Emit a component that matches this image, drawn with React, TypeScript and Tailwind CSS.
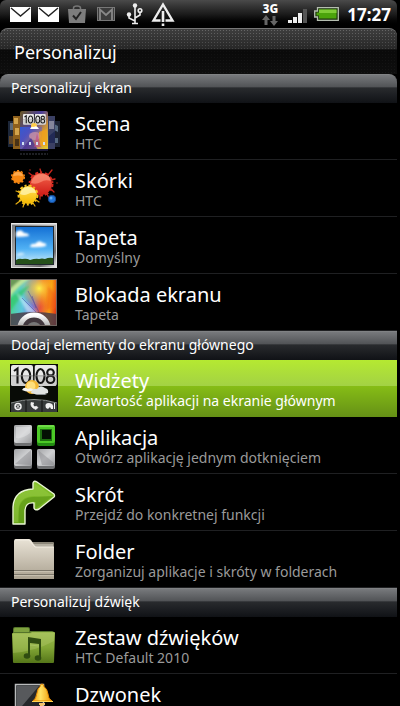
import type { ReactNode } from "react";

function Icon({ children }: { children: ReactNode }) {
  return (
    <svg viewBox="0 0 56 56" className="h-14 w-14 shrink-0" aria-hidden="true">
      {children}
    </svg>
  );
}

function FlipDigits({ x, y, s }: { x: number; y: number; s: number }) {
  return (
    <g transform={`translate(${x} ${y}) scale(${s})`}>
      <rect x="0" y="0" width="22" height="21" rx="2" fill="#e9e9e9" />
      <rect x="23.5" y="0" width="22" height="21" rx="2" fill="#e9e9e9" />
      <rect x="0" y="11" width="45.5" height="10" rx="2" fill="#cfcfcf" />
      <g fill="none" stroke="#151515" strokeWidth="2.1">
        <path d="M3 6L6.500 3.500V18.500" />
        <ellipse cx="15" cy="11" rx="4.200" ry="7" />
        <ellipse cx="29.500" cy="11" rx="4" ry="7" />
        <ellipse cx="39.500" cy="7.500" rx="3.300" ry="3.300" />
        <ellipse cx="39.500" cy="14.300" rx="3.800" ry="3.700" />
      </g>
      <path d="M0 10.800H46" stroke="#888" strokeWidth="0.8" />
      <path d="M22.800 0V21" stroke="#111" strokeWidth="1.4" />
    </g>
  );
}

function SceneIcon() {
  return (
    <Icon>
      <defs>
        <linearGradient id="sceneBg" x1="0" y1="0" x2="1" y2="1">
          <stop offset="0" stopColor="#6d5a22" />
          <stop offset="0.4" stopColor="#4b3f9c" />
          <stop offset="0.65" stopColor="#c9923c" />
          <stop offset="1" stopColor="#e8d030" />
        </linearGradient>
        <linearGradient id="sceneBlue" x1="0" y1="0" x2="1" y2="1">
          <stop offset="0" stopColor="#2f58d8" />
          <stop offset="1" stopColor="#8a5ac8" stopOpacity="0" />
        </linearGradient>
        <filter id="sceneSoft">
          <feGaussianBlur stdDeviation="0.7" />
        </filter>
      </defs>
      <g filter="url(#sceneSoft)">
        <rect x="2" y="18" width="7" height="26" fill="#1c2838" />
        <rect x="4" y="20" width="4" height="7" fill="#5b6b7a" />
        <rect x="3" y="33" width="5" height="8" fill="#5d452c" />
        <rect x="7" y="13" width="7" height="33" fill="#8d5e1a" />
        <path d="M8 15h4v6H8zM9 25h4v7H9z" fill="#d3a44c" />
        <rect x="9" y="36" width="4" height="7" fill="#493012" />
        <rect x="47" y="18" width="7" height="26" fill="#1a2232" />
        <path d="M48 21l4 2v6l-4-2zM49 35h3v5h-3z" fill="#556880" />
        <rect x="41" y="13" width="8" height="33" fill="#3a4164" />
        <path d="M43 18h5v8h-5z" fill="#85869c" />
        <path d="M43 33l6-5v12h-6z" fill="#232c55" />
      </g>
      <rect x="14" y="8" width="28" height="40" rx="2" fill="url(#sceneBg)" />
      <rect x="14" y="24" width="22" height="24" fill="url(#sceneBlue)" />
      <g filter="url(#sceneSoft)">
        <ellipse cx="29" cy="33" rx="6" ry="4" fill="#c890a8" opacity="0.8" />
        <path d="M15 47L25 35L32 47Z" fill="#3d2b97" opacity="0.7" />
        <path d="M33 29L41 26V43H34Z" fill="#f4a31a" opacity="0.8" />
        <path d="M31 30L35 44H28Z" fill="#c0478a" opacity="0.6" />
      </g>
      <FlipDigits x={17} y={11} s={0.5} />
      <circle cx="28" cy="23" r="3" fill="#ffce4c" />
      <path d="M24 26q1-3 4-2q3-2 5 2z" fill="#fff" />
      <g fill="#cfe0f4">
        <rect x="16" y="39" width="2" height="3" />
        <rect x="23" y="39" width="2" height="3" />
        <rect x="30" y="39" width="2" height="3" />
        <rect x="37" y="39" width="2" height="3" />
      </g>
      <path d="M14 46h28v2H14z" fill="#1b1835" />
      <path d="M14 51h28" stroke="#3d3e49" strokeWidth="1" strokeDasharray="2 1" />
    </Icon>
  );
}

function SkinsIcon() {
  return (
    <Icon>
      <defs>
        <linearGradient id="red" x1="0" y1="0" x2="0" y2="1">
          <stop offset="0" stopColor="#f4664c" />
          <stop offset="1" stopColor="#d01c18" />
        </linearGradient>
        <linearGradient id="yellow" x1="0" y1="0" x2="0" y2="1">
          <stop offset="0" stopColor="#ffe45a" />
          <stop offset="1" stopColor="#f7b900" />
        </linearGradient>
      </defs>
      <circle cx="35" cy="24" r="11" fill="url(#red)" />
      <circle cx="35" cy="24" r="11.500" fill="none" stroke="#d8281f" strokeWidth="2" strokeDasharray="3 2 2 3 4 2" />
      <path d="M27 16l-4-3M42 15l4-5M35 12l-1-3M45 20l4-1M45 29l3 3M41 34l2 4M34 35v4" stroke="#c9281d" strokeWidth="1.300" strokeLinecap="round" />
      <path d="M25 23q2-9 11-9q8 0 9 7q-6-2-10 1q-5 3-10 1z" fill="#ff9b80" opacity="0.6" />
      <circle cx="12" cy="17" r="6" fill="#f68712" />
      <circle cx="12" cy="17" r="6.300" fill="none" stroke="#f68712" strokeWidth="1.500" strokeDasharray="2 2" />
      <path d="M7 16q1-4 5-4q4 0 5 4q-5-1-10 0z" fill="#ffb15b" opacity="0.8" />
      <circle cx="22" cy="35" r="9" fill="url(#yellow)" />
      <circle cx="22" cy="35" r="9.500" fill="none" stroke="#f8c41c" strokeWidth="2" strokeDasharray="3 2 2 2" />
      <path d="M14 41l-4 3M18 44l-1 3M27 43l2 3M13 32l-3-1M30 40l3 2" stroke="#e5ae12" strokeWidth="1.200" strokeLinecap="round" />
      <path d="M14 34q2-7 8-7q7 0 8 6q-5-1-8 1q-4 2-8 0z" fill="#fff6b5" opacity="0.75" />
      <circle cx="46" cy="39" r="3.700" fill="#2374d6" stroke="#174a94" />
      <circle cx="45" cy="38" r="1.500" fill="#67adf4" />
      <g fill="#a52a17">
        <circle cx="51" cy="23" r="0.8" />
        <circle cx="24" cy="10" r="0.8" />
      </g>
    </Icon>
  );
}

function WallpaperIcon() {
  return (
    <Icon>
      <defs>
        <linearGradient id="frame" x1="0" y1="0" x2="1" y2="1">
          <stop offset="0" stopColor="#77797b" />
          <stop offset="0.5" stopColor="#b5b5b5" />
          <stop offset="0.8" stopColor="#6b6b6b" />
          <stop offset="1" stopColor="#f2f2f2" />
        </linearGradient>
        <linearGradient id="sky" x1="0" y1="0" x2="0" y2="1">
          <stop offset="0" stopColor="#1470d4" />
          <stop offset="0.6" stopColor="#4fb0f4" />
          <stop offset="1" stopColor="#c6eafa" />
        </linearGradient>
        <filter id="soft">
          <feGaussianBlur stdDeviation="0.9" />
        </filter>
      </defs>
      <rect x="5.500" y="6.500" width="45" height="44" fill="url(#frame)" stroke="#dedede" />
      <rect x="9" y="9" width="39" height="39" fill="#20282e" />
      <rect x="10" y="10" width="37" height="36" fill="url(#sky)" />
      <g fill="#fff" filter="url(#soft)">
        <path d="M10 15q5-4 8 1q5 0 5 3q-6 1-13 1z" />
        <path d="M24 30q1-4 5-3q4-5 8-1q4 0 3 3q-6 2-16 1z" />
        <path d="M11 37q4-3 8 0q-3 2-8 2z" opacity="0.6" />
      </g>
      <path d="M10 43q3-2 6-1q5-1 8 1q6-2 9-1q3-1 6 0q4-2 8-1v6H10z" fill="#25501a" />
      <path d="M6 7h44" stroke="#f4f4f4" />
    </Icon>
  );
}

function LockIcon() {
  return (
    <Icon>
      <defs>
        <linearGradient id="rainbow" x1="0" y1="0.4" x2="1" y2="0.5">
          <stop offset="0" stopColor="#4ad68c" />
          <stop offset="0.28" stopColor="#5cc7de" />
          <stop offset="0.5" stopColor="#7a74d0" />
          <stop offset="0.66" stopColor="#e8563a" />
          <stop offset="0.85" stopColor="#f79a12" />
          <stop offset="1" stopColor="#e03416" />
        </linearGradient>
        <radialGradient id="glow" cx="0.62" cy="0.2" r="0.4">
          <stop offset="0" stopColor="#fff04a" />
          <stop offset="1" stopColor="#ffb000" stopOpacity="0" />
        </radialGradient>
        <linearGradient id="ring" x1="0" y1="0" x2="0" y2="1">
          <stop offset="0" stopColor="#fff" />
          <stop offset="1" stopColor="#a2a2a2" />
        </linearGradient>
        <filter id="lockSoft">
          <feGaussianBlur stdDeviation="1.2" />
        </filter>
        <clipPath id="lockClip">
          <rect x="4" y="5" width="47" height="47" />
        </clipPath>
      </defs>
      <g clipPath="url(#lockClip)">
        <rect x="4" y="5" width="47" height="47" fill="url(#rainbow)" />
        <rect x="4" y="5" width="47" height="47" fill="url(#glow)" />
        <g filter="url(#lockSoft)">
          <path d="M2 3H26Q12 12 2 25Z" fill="#bfe49a" />
          <path d="M2 3H18Q8 11 2 17Z" fill="#6a9a58" />
          <path d="M2 26Q15 15 24 11Q17 20 2 40Z" fill="#2fc767" opacity="0.7" />
          <path d="M10 18L31 39L21 38Z" fill="#d8f2ff" opacity="0.6" />
          <path d="M42 12L50 20V34L40 36Z" fill="#f25c1c" opacity="0.5" />
        </g>
        <path d="M22 17L33 38M26 22L30 34M16 24L30 38" stroke="#403f9b" strokeWidth="0.8" opacity="0.6" />
        <path d="M4 40Q28 36 51 40V52H4Z" fill="#4a3d48" opacity="0.85" />
        <path d="M14 54A14 13 0 0 1 42 54" fill="#42383e" stroke="url(#ring)" strokeWidth="5" />
        <path d="M21 54A7 6 0 0 1 35 54Z" fill="#777" />
      </g>
      <rect x="4.500" y="5.500" width="46" height="46" fill="none" stroke="#6e6560" />
    </Icon>
  );
}

function WidgetsIcon() {
  return (
    <Icon>
      <rect x="4" y="4" width="48" height="48" fill="#080b06" />
      <FlipDigits x={5} y={5} s={1} />
      <circle cx="26" cy="27" r="7" fill="#f5b935" />
      <circle cx="25" cy="26" r="4.500" fill="#ffdf7c" />
      <path d="M16 30q2-4 6-1q3-2 6 1q-5 3-12 0z" fill="#f3f3ee" />
      <path d="M25 33q1-5 6-4q3-5 8-1q4 1 3 5q-8 3-17 0z" fill="#dfe2e2" />
      <path d="M29 34h12l-2 1h-8z" fill="#8b9093" />
      <path d="M5 52V43Q28 36 51 43V52Z" fill="#383c3c" />
      <path d="M5 43Q28 36 51 43" stroke="#898e8d" fill="none" />
      <path d="M20 40V52M36 40V52" stroke="#111" />
      <circle cx="12" cy="46.500" r="3" fill="none" stroke="#f0f0f0" strokeWidth="1.500" />
      <path d="M10.500 45l3 3m0-3l-3 3" stroke="#f0f0f0" />
      <path d="M25 42.500q-1 5 5 7l2-2-2-1.500-1 1q-2-1-2-3l1-1z" fill="#f0f0f0" stroke="#f0f0f0" strokeWidth="0.7" />
      <path d="M40 48q-2-5 3-5q5 0 4 6h-2l-1-2-2 2z" fill="#f0f0f0" />
      <path d="M48.500 43v6" stroke="#f0f0f0" />
    </Icon>
  );
}

function AppsIcon() {
  return (
    <Icon>
      <defs>
        <linearGradient id="tile" x1="0" y1="0" x2="1" y2="1">
          <stop offset="0" stopColor="#a2a3a6" />
          <stop offset="0.5" stopColor="#cfd0d2" />
          <stop offset="1" stopColor="#9c9da0" />
        </linearGradient>
      </defs>
      <rect x="8" y="8" width="18" height="21" rx="2" fill="#6f7072" />
      <rect x="8" y="8" width="18" height="18" rx="2" fill="url(#tile)" />
      <path d="M10 10h14v6q-7 6-14 5z" fill="#e5e5e8" opacity="0.5" />
      <rect x="8" y="32" width="18" height="20" rx="2" fill="#6f7072" />
      <rect x="8" y="32" width="18" height="17" rx="2" fill="url(#tile)" />
      <path d="M9 47L25 33v15z" fill="#8d8e91" opacity="0.5" />
      <rect x="31" y="32" width="18" height="20" rx="2" fill="#6f7072" />
      <rect x="31" y="32" width="18" height="17" rx="2" fill="url(#tile)" />
      <path d="M32 33l16 13v2H36z" fill="#8d8e91" opacity="0.5" />
      <rect x="31" y="8" width="18" height="21" rx="2" fill="#238c13" />
      <rect x="31" y="8" width="18" height="18" rx="2" fill="#4cc927" />
      <rect x="34" y="12" width="12" height="12" fill="#1d6e10" />
      <rect x="36" y="13" width="9" height="9" fill="#041004" />
      <path d="M32 9h16" stroke="#93ec6a" />
    </Icon>
  );
}

function ShortcutIcon() {
  return (
    <Icon>
      <defs>
        <linearGradient id="arrow" x1="0" y1="0" x2="0" y2="1">
          <stop offset="0" stopColor="#86c22c" />
          <stop offset="1" stopColor="#6aa81c" />
        </linearGradient>
      </defs>
      <path
        d="M7 50V33Q8 16 27 15V9Q28 6 31 8L48 20Q49 22 48 23L33 35Q29 37 28 34V29Q19 28 19 37V50Z"
        fill="url(#arrow)"
        stroke="#e8f5d2"
        strokeWidth="1.400"
        strokeLinejoin="round"
      />
      <path d="M8 48V33Q9 17 28 16V9L47 22Q35 23 28 22Q16 22 13 32Q12 38 12 48Z" fill="#a5d558" opacity="0.3" />
      <path d="M13 49V35Q15 23 28 23L47 22L30 34V28Q19 26 18 37V49Z" fill="#558f12" opacity="0.5" />
    </Icon>
  );
}

function FolderIcon() {
  return (
    <Icon>
      <defs>
        <linearGradient id="beige" x1="0" y1="0" x2="0" y2="1">
          <stop offset="0" stopColor="#e9e3d6" />
          <stop offset="1" stopColor="#aaa190" />
        </linearGradient>
      </defs>
      <path d="M26 11H47q1 0 1 1v8H26z" fill="#8b8679" />
      <path d="M28 13H47v3H28z" fill="#b5b0a2" />
      <path d="M8 10q0-2 2-2h13q1 0 2 1l4 6q1 1 2 1h17v32H8z" fill="url(#beige)" />
      <path d="M9 9h14l6 7h19" stroke="#f7f3e9" fill="none" strokeWidth="0.8" />
      <path d="M8 39.500h40M8 43.500h40" stroke="#7d776b" />
      <path d="M8 40.500h40M8 44.500h40" stroke="#d0c9b9" strokeWidth="0.7" />
    </Icon>
  );
}

function MusicFolderIcon() {
  return (
    <Icon>
      <defs>
        <linearGradient id="green" x1="0" y1="0" x2="0" y2="1">
          <stop offset="0" stopColor="#9dbb50" />
          <stop offset="0.5" stopColor="#83a736" />
          <stop offset="1" stopColor="#557619" />
        </linearGradient>
      </defs>
      <path d="M7 18V12q0-2 2-2h13q2 0 2 2v2h22q2 0 2 2v4z" fill="#55742a" />
      <path d="M8 12q0-1 1-1h13q1 0 1 1v3H8z" fill="#7fa23f" />
      <path d="M6 17q0-1 1-1h17l2-1h22q1 0 1 1l-1 29q0 1-1 1H8q-1 0-1-1z" fill="url(#green)" />
      <path d="M7 17h17l2-1h22v8Q30 34 7 36z" fill="#c0d47a" opacity="0.3" />
      <g fill="#2f4c10">
        <ellipse cx="21" cy="39" rx="3.300" ry="2.700" />
        <ellipse cx="32" cy="41" rx="3.300" ry="2.700" />
        <path d="M22 20L35 22V41H33V27L24 26V39H22Z" />
      </g>
      <path d="M24 28l9 1" stroke="#a9c566" strokeWidth="0.8" />
    </Icon>
  );
}

function RingtoneIcon() {
  return (
    <Icon>
      <defs>
        <linearGradient id="bell" x1="0" y1="0" x2="1" y2="0">
          <stop offset="0" stopColor="#f6a009" />
          <stop offset="0.4" stopColor="#ffe264" />
          <stop offset="1" stopColor="#ef9600" />
        </linearGradient>
      </defs>
      <rect x="9.500" y="10.500" width="28" height="45" fill="#25272a" stroke="#b9bbbc" strokeWidth="1.500" />
      <path d="M11 12h22L11 38z" fill="#57595c" />
      <path d="M27 27q3-2 4-8q1-6 3-6q0-3 2-3q2 0 2 3q3 1 4 7q0 5 4 7z" fill="url(#bell)" stroke="#e58b05" />
      <path d="M26 27h21v1H26z" fill="#ffd555" />
      <path d="M33 29h6v2h-2v4h-3v-4h-1z" fill="#f2c06a" />
    </Icon>
  );
}

interface Item {
  title: string;
  sub?: string;
  icon: ReactNode;
  active?: boolean;
}

const sections: { heading: string; items: Item[] }[] = [
  {
    heading: "Personalizuj ekran",
    items: [
      { title: "Scena", sub: "HTC", icon: <SceneIcon /> },
      { title: "Skórki", sub: "HTC", icon: <SkinsIcon /> },
      { title: "Tapeta", sub: "Domyślny", icon: <WallpaperIcon /> },
      { title: "Blokada ekranu", sub: "Tapeta", icon: <LockIcon /> },
    ],
  },
  {
    heading: "Dodaj elementy do ekranu głównego",
    items: [
      { title: "Widżety", sub: "Zawartość aplikacji na ekranie głównym", icon: <WidgetsIcon />, active: true },
      { title: "Aplikacja", sub: "Otwórz aplikację jednym dotknięciem", icon: <AppsIcon /> },
      { title: "Skrót", sub: "Przejdź do konkretnej funkcji", icon: <ShortcutIcon /> },
      { title: "Folder", sub: "Zorganizuj aplikacje i skróty w folderach", icon: <FolderIcon /> },
    ],
  },
  {
    heading: "Personalizuj dźwięk",
    items: [
      { title: "Zestaw dźwięków", sub: "HTC Default 2010", icon: <MusicFolderIcon /> },
      { title: "Dzwonek", icon: <RingtoneIcon /> },
    ],
  },
];

function Envelope() {
  return (
    <svg viewBox="0 0 21 15" className="h-[15px] w-[21px]" aria-hidden="true">
      <rect width="21" height="15" fill="#fff" />
      <path d="M1 1l9.500 8L20 1" fill="none" stroke="#222" strokeWidth="1.400" />
    </svg>
  );
}

function StatusBar() {
  return (
    <div className="flex h-7 shrink-0 items-center rounded-t-md bg-linear-to-b from-[#4a4a4a] via-[#1c1c1c] via-50% to-black pr-1.5 pl-2.5">
      <div className="flex items-center gap-[7px]">
        <Envelope />
        <Envelope />
        <svg viewBox="0 0 18 18" className="ml-0.5 h-[18px] w-[18px]" aria-hidden="true">
          <path d="M5.500 5V3q0-2 3.500-2t3.500 2v2" fill="none" stroke="#777" strokeWidth="1.500" />
          <path d="M0 4h18l-1 14H1z" fill="#7d7d7d" />
          <path d="M5 10.500l3 3.500 5-7" fill="none" stroke="#222" strokeWidth="2" />
        </svg>
        <svg viewBox="0 0 18 14" className="ml-1 h-3.5 w-[18px]" aria-hidden="true">
          <rect x="0.500" y="0.500" width="17" height="13" fill="#3c3c3c" stroke="#777" />
          <path d="M3 13V2.500l6 5.500 6-5.500V13" fill="none" stroke="#888" strokeWidth="1.800" />
        </svg>
        <svg viewBox="0 0 18 22" className="ml-1 h-[22px] w-[18px]" aria-hidden="true">
          <g fill="none" stroke="#eee" strokeWidth="1.600">
            <path d="M9 3V20M9 18L3 15V12M9 15L14 12V9M6 20.500h6" />
            <circle cx="14" cy="7.500" r="1.800" />
          </g>
          <circle cx="9" cy="2.500" r="2.200" fill="#eee" />
          <circle cx="3" cy="11.500" r="2.200" fill="#eee" />
        </svg>
        <svg viewBox="0 0 24 24" className="h-6 w-6" aria-hidden="true">
          <path d="M12 2.500L21.500 18.500H2.500Z" fill="none" stroke="#eee" strokeWidth="2.400" />
          <path d="M12 9V20" stroke="#151515" strokeWidth="5" />
          <path d="M12 9V20" stroke="#eee" strokeWidth="2.600" />
          <path d="M10.700 21.500h2.600v2.500h-2.600z" fill="#eee" />
        </svg>
      </div>
      <div className="ml-auto flex items-center">
        <div className="mr-2.5 flex w-4 flex-col items-center">
          <span className="text-[12px] leading-[12px] font-extrabold text-white">3G</span>
          <svg viewBox="0 0 16 11" className="h-[11px] w-4" aria-hidden="true">
            <path d="M4 0L8 5H5.500V10H2.500V5H0ZM12 11L8 6H10.500V1H13.500V6H16Z" fill="#666" />
          </svg>
        </div>
        <svg viewBox="0 0 20 16" className="mt-1 mr-1.5 h-4 w-5" aria-hidden="true">
          <path d="M0 12h4v3H0zM5 9h4v6H5zM10 5h4v10h-4z" fill="#eee" />
          <path d="M15 1h4v14h-4z" fill="#555" />
        </svg>
        <svg viewBox="0 0 25 14" className="mr-2 h-3.5 w-[25px]" aria-hidden="true">
          <path d="M3.500 0.700H24.300V13.300H3.500V10H0.700V4H3.500Z" fill="#1c350c" stroke="#b5beb0" strokeWidth="1.300" />
          <path d="M5 2.500H22.500V11.500H5V8.500H2.500V5.500H5Z" fill="#4ba30b" />
          <path d="M5 2.500H22.500V6H5Z" fill="#7ecb36" />
        </svg>
        <span className="pt-0.5 text-[17px] leading-[26px] font-bold text-white">17:27</span>
      </div>
    </div>
  );
}

function Row({ item }: { item: Item }) {
  return (
    <li>
      <button
        type="button"
        className={
          item.active
            ? "flex h-[57px] w-full items-start gap-[13px] bg-[linear-gradient(#b5e931,#a3d244_45%,#86bd16_46%,#659016)] pl-1.5 text-left text-white"
            : "flex h-[57px] w-full items-start gap-[13px] border-b border-[#1f2022] bg-black pl-1.5 text-left text-white"
        }
      >
        {item.icon}
        <span className="flex min-w-0 flex-col pt-2.5">
          <span className="text-[20px] leading-[22px] whitespace-nowrap">{item.title}</span>
          {item.sub && (
            <span
              className={
                item.active
                  ? "text-[14px] leading-[18px] whitespace-nowrap text-white"
                  : "text-[14px] leading-[18px] whitespace-nowrap text-[#9a9a9a]"
              }
            >
              {item.sub}
            </span>
          )}
        </span>
      </button>
    </li>
  );
}

export default function App() {
  return (
    <div className="h-screen overflow-hidden bg-black pr-[3px] font-['Noto_Sans','Open_Sans',sans-serif]">
      <StatusBar />
      <header className="flex h-[46px] items-center rounded-t-lg border-t border-[#777] bg-[radial-gradient(#0000_35%,#0006_36%),linear-gradient(#686868,#404040_45%,#101010_46%,#171717)] bg-[size:3px_3px,100%_100%] px-3.5">
        <h1 className="text-[18px] leading-6 text-white">Personalizuj</h1>
      </header>
      <main>
        {sections.map((s) => (
          <section key={s.heading} className="first:*:rounded-t-lg">
            <h2 className="h-[29px] border-t border-[#808284] bg-[linear-gradient(#77797c,#505255_44%,#292b2e_45%,#101216)] px-[11px] text-[14px] leading-[26px] text-white">
              {s.heading}
            </h2>
            <ul>
              {s.items.map((i) => (
                <Row key={i.title} item={i} />
              ))}
            </ul>
          </section>
        ))}
      </main>
    </div>
  );
}
